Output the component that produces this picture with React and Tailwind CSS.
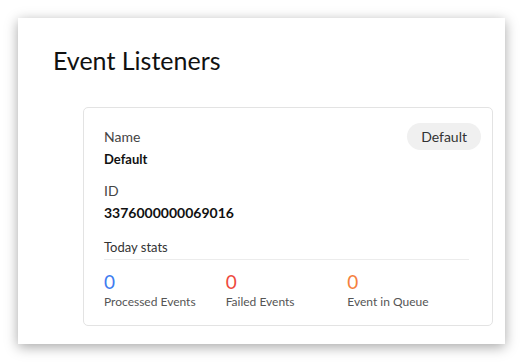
import React from 'react';

const stats = [
  { value: 0, label: 'Processed Events', color: 'text-[#3f7cf0]' },
  { value: 0, label: 'Failed Events', color: 'text-[#ee4b3f]' },
  { value: 0, label: 'Event in Queue', color: 'text-[#f5813d]' },
];

export default function App() {
  return (
    <div className="bg-white w-[532px] h-[362px] pt-[18px] pl-[18px] font-['Lato',sans-serif] text-[#222]">
      <div className="w-[487px] h-[326px] bg-white shadow-[0_3px_12px_rgba(0,0,0,0.35)] pt-[26px] pl-[35px]">
        <h1 className="text-[25px] leading-[32px] text-[#111]">Event Listeners</h1>

        <div className="mt-[31px] ml-[30px] w-[410px] h-[219px] border border-[#e3e3e3] rounded-[5px] pl-[20px] pr-[23px] pt-[15px]">
          <div className="flex justify-between items-start">
            <div className="pt-[5px]">
              <div className="text-[14px] leading-[18px] text-[#444]">Name</div>
              <div className="mt-[4px] text-[13px] leading-[18px] font-bold text-[#111]">Default</div>
            </div>
            <span className="mr-[-12px] rounded-full bg-[#f0f0f0] px-[14px] h-[27px] flex items-center text-[14px] text-[#333]">
              Default
            </span>
          </div>

          <div className="mt-[14px] text-[14px] leading-[18px] text-[#444]">ID</div>
          <div className="mt-[4px] text-[14px] leading-[18px] font-bold text-[#111]">3376000000069016</div>

          <div className="mt-[16px] text-[13px] leading-[18px] text-[#333] pb-[3px] border-b border-[#ececec]">
            Today stats
          </div>

          <div className="mt-[12px] grid grid-cols-3">
            {stats.map((s) => (
              <div key={s.label}>
                <div className={`text-[19px] leading-[20px] ${s.color}`}>{s.value}</div>
                <div className="mt-[2px] text-[12px] leading-[16px] text-[#555]">{s.label}</div>
              </div>
            ))}
          </div>
        </div>
      </div>
    </div>
  );
}
